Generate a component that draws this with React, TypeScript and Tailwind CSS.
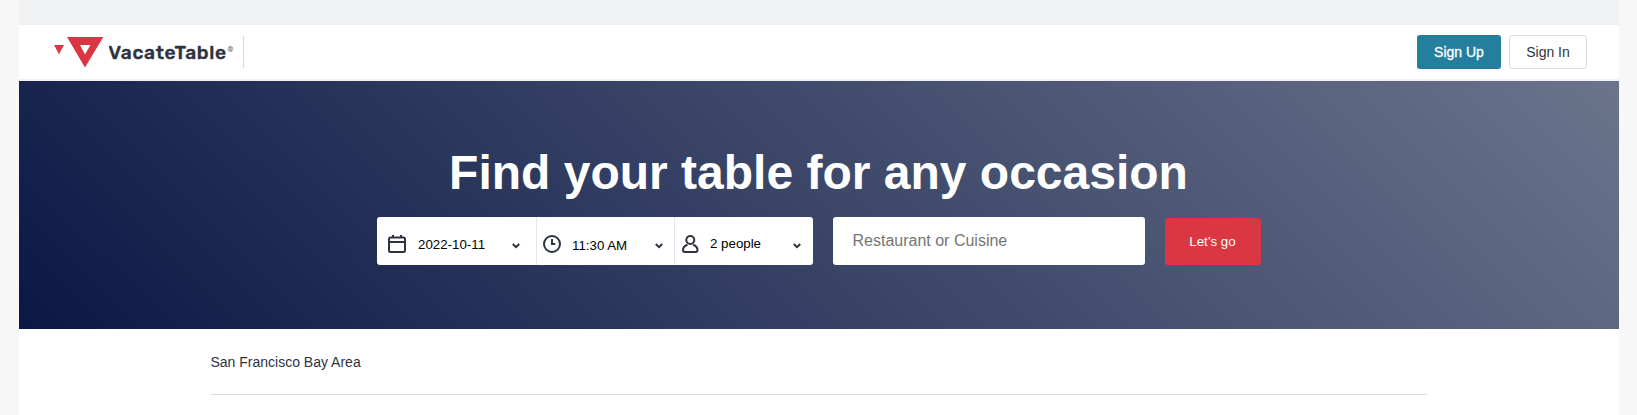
import React from "react";

function Chevron({ className }: { className: string }) {
  return (
    <svg className={className} width="8" height="6" viewBox="0 0 8 6" fill="none" stroke="#2d333f" strokeWidth="2">
      <path d="M0.8 1 4 4.2 7.2 1" />
    </svg>
  );
}

function Logo() {
  return (
    <div className="flex h-8 items-start">
      <svg className="mt-px shrink-0" width="50" height="30" viewBox="0 0 50 30">
        <path fill="#da3743" d="M0 8h10L5 17.3z" />
        <path fill="#da3743" fillRule="evenodd" d="M13 0h36.3L31 30.5zM26 8h10.4L31 17.5z" />
      </svg>
      <svg className="ml-[5px] shrink-0" width="134" height="32" viewBox="0 0 134 32">
        <text
          x="-0.8"
          y="23.3"
          textLength="118"
          fill="#2d333f"
          stroke="#2d333f"
          strokeWidth="0.4"
          className="font-['Rubik','Inter',sans-serif] text-[19.2px] font-medium"
        >
          VacateTable
        </text>
        <text x="118.5" y="15.5" fill="#4b505a" className="font-['Roboto',sans-serif] text-[7.5px]">
          ®
        </text>
      </svg>
      <div className="h-8 w-px bg-[#d8d9db]" />
    </div>
  );
}

export default function App() {
  return (
    <div className="h-[415px] overflow-hidden bg-[#f7f7f7] pr-[18px] pl-[19px] font-['Liberation_Sans',Arial,sans-serif] text-[#2d333f]">
      <div className="flex h-full flex-col bg-white">
        <div className="h-[25px] shrink-0 bg-[#f0f1f3]" />
        <header className="flex h-14 shrink-0 items-start justify-between border-b-2 border-[#f1f2f4] pr-8 pl-[35px]">
          <div className="pt-[11px]">
            <Logo />
          </div>
          <div className="flex gap-2 pt-2.5">
            <button className="h-[34px] w-[84px] rounded-[3px] bg-[#247f9e] text-sm text-white [-webkit-text-stroke:0.3px_white]">
              Sign Up
            </button>
            <button className="h-[34px] w-[78px] rounded-[3px] border border-[#d8d9db] bg-white text-sm">
              Sign In
            </button>
          </div>
        </header>
        <section className="flex h-[248px] shrink-0 flex-col items-center bg-[linear-gradient(45deg,#0b1845_0%,#202c54_22%,#6b748c_100%)]">
          <h1 className="mt-[62px] -ml-px h-[74px] text-5xl leading-[60px] font-bold whitespace-nowrap text-white">
            Find your table for any occasion
          </h1>
          <div className="flex h-12 items-start gap-5">
            <div className="flex h-12 w-[436px] rounded-[3px] bg-white text-[13.3px] text-black">
              <div className="flex w-[160px] items-center border-r border-[#e5e6e9] pt-[7px] pl-[11px]">
                <svg className="-mt-px shrink-0" width="18" height="18" viewBox="0 0 18 18" fill="none" stroke="#2d333f" strokeWidth="2">
                  <rect x="1" y="2.5" width="16" height="14.5" rx="1.5" />
                  <path d="M1 7h16M5 0v2M13 0v2" />
                </svg>
                <span className="ml-3 w-[69px] whitespace-nowrap">2022-10-11</span>
                <Chevron className="mt-0.5 ml-[25px] shrink-0" />
              </div>
              <div className="flex w-[138px] items-center border-r border-[#e5e6e9] pt-[7px] pl-1.5">
                <svg className="-mt-px shrink-0" width="18" height="18" viewBox="0 0 18 18" fill="none" stroke="#2d333f" strokeWidth="2">
                  <circle cx="9" cy="9" r="8" />
                  <path d="M9 4v5h3.2" />
                </svg>
                <span className="mt-[3px] ml-[11px] w-[58px] whitespace-nowrap">11:30 AM</span>
                <Chevron className="mt-0.5 ml-[25px] shrink-0" />
              </div>
              <div className="flex flex-1 items-center pt-[7px] pl-[7px]">
                <svg className="-mt-px shrink-0" width="17" height="18" viewBox="0 0 17 18" fill="none" stroke="#2d333f" strokeWidth="2">
                  <circle cx="8.3" cy="5" r="4" />
                  <path d="M5.5 9.8C2.7 10.8 1 12.6 1 15c0 1.200.8 2 2 2h10.500c1.200 0 2-.8 2-2 0-2.400-1.700-4.200-4.400-5.200" />
                </svg>
                <span className="-mt-0.5 ml-[11px] w-[51px] whitespace-nowrap">2 people</span>
                <Chevron className="mt-0.5 ml-8 shrink-0" />
              </div>
            </div>
            <input
              className="h-12 w-[312px] rounded-[3px] bg-white px-[19.5px] text-base placeholder:text-[#757575]"
              placeholder="Restaurant or Cuisine"
            />
            <button className="mt-px h-[47px] w-24 rounded-[3px] bg-[#da3743] pr-px text-[13.3px] text-white">
              Let’s go
            </button>
          </div>
        </section>
        <main className="mx-48 h-[66px] shrink-0 border-b border-[#d8d9db] pt-[22px]">
          <p className="-ml-[0.5px] text-sm leading-[22px]">San Francisco Bay Area</p>
        </main>
      </div>
    </div>
  );
}
